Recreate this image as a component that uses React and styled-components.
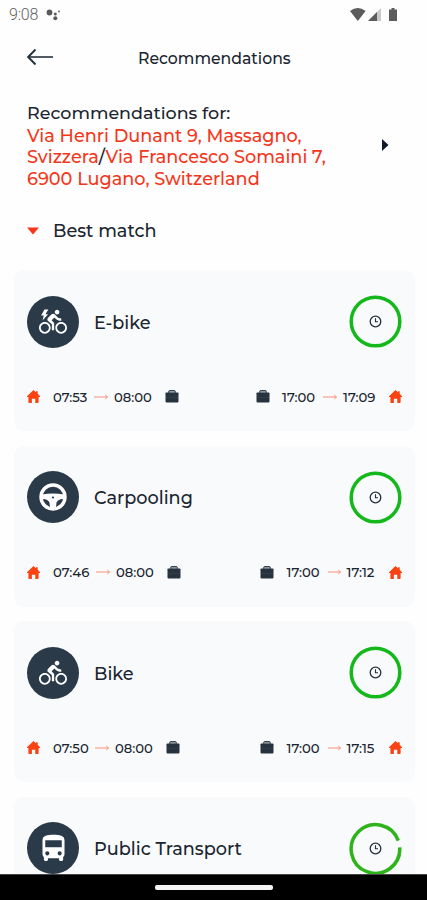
import React from 'react';
import styled, { createGlobalStyle } from 'styled-components';
import { MdDirectionsBike, MdDirectionsBus } from 'react-icons/md';

const GlobalStyle = createGlobalStyle`
  * {
    box-sizing: border-box;
  }
  body {
    margin: 0;
    background: #fff;
    overflow: hidden;
  }
`

const Screen = styled.div`
  width: 427px;
  height: 900px;
  display: flex;
  flex-direction: column;
  overflow: hidden;
  background: #fefefe;
  color: #1b2530;
  font-family: Montserrat, Inter, sans-serif;
  font-weight: 500;
  svg {
    display: block;
    flex: none;
  }
`

const StatusBar = styled.div`
  height: 28px;
  flex: none;
  display: flex;
  align-items: center;
  padding: 0 29px 0 9px;
  color: #606060;
`

const Clock = styled.span`
  font-family: Roboto, sans-serif;
  font-weight: 300;
  font-size: 16px;
  width: 37px;
  letter-spacing: -0.2px;
`

const StatusIcons = styled.div`
  display: flex;
  align-items: center;
  margin-left: auto;
`

const Header = styled.header`
  height: 60px;
  flex: none;
  display: grid;
  grid-template-columns: 111px 1fr;
  align-items: center;
  padding: 0 27px 2px;
`

const Text = styled.span`
  font-size: ${({size}) => size || 17.7}px;
  line-height: 21.5px;
  white-space: nowrap;
`

const Title = styled(Text)`
  padding-top: 3px;
`

const Trip = styled.section`
  height: 114px;
  flex: none;
  display: flex;
  align-items: center;
  justify-content: space-between;
  padding: 0 38px 0 27px;
`

const Addresses = styled.div`
  display: flex;
  flex-direction: column;
  padding-top: 1px;
  color: #f5361a;
`

const Label = styled.div`
  color: #1b2530;
  height: 23px;
`

const Slash = styled.span`
  color: #1b2530;
`

const Match = styled.div`
  height: 56px;
  flex: none;
  display: flex;
  align-items: center;
  gap: 14px;
  padding: 1px 27px 0;
`

const List = styled.main`
  flex: 1;
  min-height: 0;
  overflow: hidden;
  display: flex;
  flex-direction: column;
  gap: 14.5px;
  padding: 12px 12px 0 14px;
`

const Card = styled.article`
  height: 161px;
  flex: none;
  border-radius: 10px;
  background: #f8fafc;
  padding: 25px 13px 0;
`

const CardTop = styled.div`
  display: flex;
  align-items: center;
  height: 53px;
`

const Badge = styled.div`
  width: 52px;
  height: 52px;
  border-radius: 50%;
  background: #2a3a49;
  color: #fff;
  display: flex;
  align-items: center;
  justify-content: center;
  margin-right: 15px;
`

const Name = styled.div`
  flex: 1;
  padding-top: 2px;
`

const Times = styled.div`
  display: flex;
  align-items: center;
  justify-content: space-between;
  margin-top: 37.5px;
`

const Leg = styled.div`
  display: flex;
  align-items: center;
  height: 22px;
`

const Time = styled.span`
  font-size: 13.2px;
  width: ${({$width}) => $width}px;
  white-space: nowrap;
  margin-left: ${({$gap}) => $gap}px;
`

const NavBar = styled.div`
  height: 26px;
  flex: none;
  background: #000;
  border-top: 1px solid #444;
  display: flex;
  justify-content: center;
  padding-top: 10px;
`

const Pill = styled.div`
  width: 118px;
  height: 5px;
  border-radius: 2px;
  background: #f4f4f4;
`

const Home = () => (
  <svg width="13" height="13" viewBox="0 0 13 13" fill="#fa4212">
    <path d="M6.5 0 9 2.2V1.2h1.700v2.500L13 6.200V7h-1.400v5.200q0 .8-.8.8H8.300V8.700H4.900V13H2.200q-.8 0-.8-.8V7H0v-.8z" />
  </svg>
)

const Bag = () => (
  <svg width="14" height="13" viewBox="0 0 14 13" fill="#26323e">
    <path d="M3.700 2.800V1.500q0-.9.900-.9h4.800q.9 0 .9.900v1.300" fill="#9aa2a9" stroke="#26323e" />
    <path d="M1.300 2.500h11.400q.8 0 .8.800v8.300q0 .8-.8.8H1.300q-.8 0-.8-.8V3.300q0-.8.8-.8z" />
    <path d="M1 7.300h12" stroke="#3d4954" strokeWidth=".6" />
  </svg>
)

const Arrow = ({ width = 14 }) => (
  <svg width={width} height="6" viewBox={`${14 - width} 0 ${width} 6`} fill="none" stroke="#fa8468" strokeWidth=".9">
    <path d="M0 3h13.500M11.300 1l2.200 2-2.200 2" />
  </svg>
)

const EBike = () => (
  <svg width="28" height="28" viewBox="0 0 24 24" fill="currentColor">
    <MdDirectionsBike size={24} />
    <path d="M4.700 1.200 1.800 6.500h2.300L3 10.800l4.800-5.500H5.500L8 1.200z" />
  </svg>
)

const Wheel = () => (
  <svg width="28" height="28" viewBox="0 0 28 28" fill="none">
    <circle cx="14" cy="14" r="12" stroke="#fff" strokeWidth="3.400" />
    <path fill="#fff" d="M3 11.500Q14 9.500 25 11.500V16q-5.500-.5-7.500 3.500L17 25h-6l-.5-5.500Q8.500 15.500 3 16z" />
    <circle cx="14" cy="14.500" r="1.100" fill="#2a3a49" />
  </svg>
)

const icons = {
  ebike: <EBike />,
  car: <Wheel />,
  bike: <MdDirectionsBike size={28} />,
  bus: <MdDirectionsBus size={33} />,
}

const Ring = ({ partial }) => (
  <svg width="53" height="53" viewBox="0 0 53 53" fill="none">
    {partial
      ? <path d="M50.700 25.300A24.300 24.300 0 1 1 49.300 18.700" stroke="#2fb31b" strokeWidth="3.500" />
      : <circle cx="26.500" cy="26.500" r="24.300" stroke="#14b81a" strokeWidth="3.500" />}
    <circle cx="26.500" cy="26.500" r="5.300" stroke="#26313c" strokeWidth="1.300" />
    <path d="M26.500 23.300v3.400h2.500" stroke="#26313c" strokeWidth="1.100" />
  </svg>
)

const modes = [
  { name: 'E-bike', icon: 'ebike', out: '07:53', outW: 41, back: '17:09', backW: 46, arrow: 14 },
  { name: 'Carpooling', icon: 'car', out: '07:46', outW: 43, back: '17:12', backW: 42.5, arrow: 13 },
  { name: 'Bike', icon: 'bike', out: '07:50', outW: 42, back: '17:15', backW: 42.5, arrow: 13 },
  { name: 'Public Transport', icon: 'bus', partial: true },
]

const App = () => {
  return (
    <Screen>
      <GlobalStyle />
      <StatusBar>
        <Clock>9:08</Clock>
        <svg width="15" height="13" viewBox="0 0 15 13" fill="#5a5a5a">
          <circle cx="3.500" cy="4.500" r="2.900" />
          <circle cx="9.300" cy="6" r="1.500" />
          <circle cx="9.300" cy="10.300" r="2" />
          <circle cx="13" cy="3.500" r=".9" />
        </svg>
        <StatusIcons>
          <svg width="48" height="15" viewBox="0 0 48 15" fill="#5c5c5c">
            <path d="M0 4Q7.800-2 15.600 4L7.800 14z" />
            <path d="M31 1v13H18z" fill="#c9c9c9" />
            <path d="M27 5v9h-9z" />
            <path d="M39 2.500h2.500V1h3v1.500H47V14h-8z" />
          </svg>
        </StatusIcons>
      </StatusBar>
      <Header>
        <svg width="27" height="18" viewBox="0 0 27 18" fill="none" stroke="#26313c" strokeWidth="1.600">
          <path d="M8.500 1.500 1.200 9l7.300 7.500" strokeWidth="1.900" />
          <path d="M1 9h25" />
        </svg>
        <Title size={15.7}>Recommendations</Title>
      </Header>
      <Trip>
        <Addresses>
          <Label><Text size={17.5}>Recommendations for:</Text></Label>
          <Text>Via Henri Dunant 9, Massagno,</Text>
          <Text>Svizzera<Slash>/</Slash>Via Francesco Somaini 7,</Text>
          <Text>6900 Lugano, Switzerland</Text>
        </Addresses>
        <svg width="8" height="12" viewBox="0 0 8 12" fill="#111a28">
          <path d="M1 0 7.500 6 1 12z" />
        </svg>
      </Trip>
      <Match>
        <svg width="12" height="8" viewBox="0 0 12 8" fill="#f5361a">
          <path d="M0 .5h12L6 7.500z" />
        </svg>
        <Text>Best match</Text>
      </Match>
      <List>
        {modes.map((mode) => (
          <Card key={mode.name}>
            <CardTop>
              <Badge>{icons[mode.icon]}</Badge>
              <Name><Text>{mode.name}</Text></Name>
              <Ring partial={mode.partial} />
            </CardTop>
            {mode.out && (
              <Times>
                <Leg>
                  <Home />
                  <Time $gap={13} $width={mode.outW}>{mode.out}</Time>
                  <Arrow />
                  <Time $gap={6} $width={51}>08:00</Time>
                  <Bag />
                </Leg>
                <Leg>
                  <Bag />
                  <Time $gap={12.5} $width={41}>17:00</Time>
                  <Arrow width={mode.arrow} />
                  <Time $gap={6} $width={mode.backW}>{mode.back}</Time>
                  <Home />
                </Leg>
              </Times>
            )}
          </Card>
        ))}
      </List>
      <NavBar><Pill /></NavBar>
    </Screen>
  );
};

export default App;
